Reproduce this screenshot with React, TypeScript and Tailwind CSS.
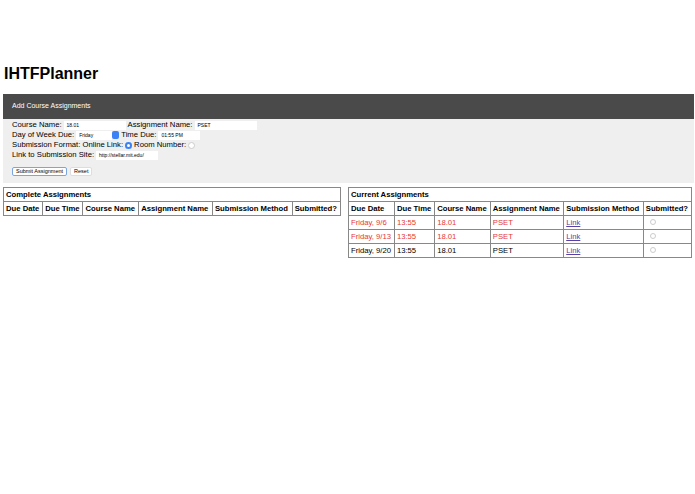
const F = { fontFamily: '"Liberation Sans", Arial, sans-serif' };
const cols = ["Due Date", "Due Time", "Course Name", "Assignment Name", "Submission Method", "Submitted?"];
const rows = [
  { d: "Friday, 9/6", red: true },
  { d: "Friday, 9/13", red: true },
  { d: "Friday, 9/20", red: false },
];
function Inp({ w, v }: { w: string; v: string }) {
  return <span className={`inline-block ${w} h-[9px] bg-white text-[5px] leading-[9px] px-[3px] align-middle`}>{v}</span>;
}
export default function App() {
  return (
    <div style={F} className="w-[695px] h-[494px] bg-white text-black text-[7.7px] overflow-hidden">
      <div className="h-[64px]" />
      <div className="px-[4px] text-[16px] font-bold leading-[20px]">IHTFPlanner</div>
      <div className="h-[10px]" />
      <div className="ml-[3px] mr-[1px] bg-[#4a4a4a] text-white text-[7px] h-[25px] flex items-center px-[9px]">Add Course Assignments</div>
      <div className="ml-[3px] mr-[1px] bg-[#efefef] h-[64px] px-[9px] pt-[1px] leading-[10px]">
        <div className="flex items-center gap-[2px]">Course Name: <Inp w="w-[62px]" v="18.01" /> Assignment Name: <Inp w="w-[62px]" v="PSET" /></div>
        <div className="flex items-center gap-[2px]">Day of Week Due: <span className="inline-flex items-center w-[36px] h-[9px] bg-white text-[5px] px-[3px]">Friday</span><span className="w-[7px] h-[8px] bg-[#3b82f6] rounded-[2px] -ml-[2px]" /> Time Due: <Inp w="w-[42px]" v="01:55 PM" /></div>
        <div className="flex items-center gap-[2px]">Submission Format: Online Link: <span className="w-[7px] h-[7px] rounded-full bg-[#3b82f6] inline-block" style={{boxShadow:"inset 0 0 0 2px #3b82f6, inset 0 0 0 4px white"}} /> Room Number: <span className="w-[7px] h-[7px] rounded-full bg-white border border-[#ccc] inline-block" /></div>
        <div className="flex items-center gap-[2px]">Link to Submission Site: <Inp w="w-[62px]" v="http://stellar.mit.edu/" /></div>
        <div className="flex gap-[3px] mt-[7px]">
          <span className="text-[5.5px] bg-white border border-[#7aa6e0] rounded-[2px] px-[3px] leading-[7px]">Submit Assignment</span>
          <span className="text-[5.5px] bg-white border border-[#ddd] rounded-[2px] px-[3px] leading-[7px]">Reset</span>
        </div>
      </div>
      <div className="flex justify-between pl-[3px] pr-[3px] pt-[4px] items-start">
        <Table title="Complete Assignments" w="w-[338px]" data={[]} />
        <Table title="Current Assignments" w="w-[344px]" data={rows} />
      </div>
    </div>
  );
}
function Table({ title, w, data }: { title: string; w: string; data: { d: string; red: boolean }[] }) {
  const c = "border border-[#888] px-[2px] h-[14px] whitespace-nowrap";
  return (
    <table className={`${w} border-collapse border border-[#888] text-[7.7px]`}>
      <tbody>
        <tr><td colSpan={6} className={`${c} font-bold`}>{title}</td></tr>
        <tr>{cols.map((h) => <td key={h} className={`${c} font-bold`}>{h}</td>)}</tr>
        {data.map((r) => (
          <tr key={r.d} className={r.red ? "text-[#e53935]" : ""}>
            <td className={c}>{r.d}</td><td className={c}>13:55</td><td className={c}>18.01</td><td className={c}>PSET</td>
            <td className={c}><span className="text-[#5b3fa8] underline">Link</span></td>
            <td className={c}><span className="inline-block w-[6px] h-[6px] rounded-full border border-[#ccc] ml-[4px]" /></td>
          </tr>
        ))}
      </tbody>
    </table>
  );
}
